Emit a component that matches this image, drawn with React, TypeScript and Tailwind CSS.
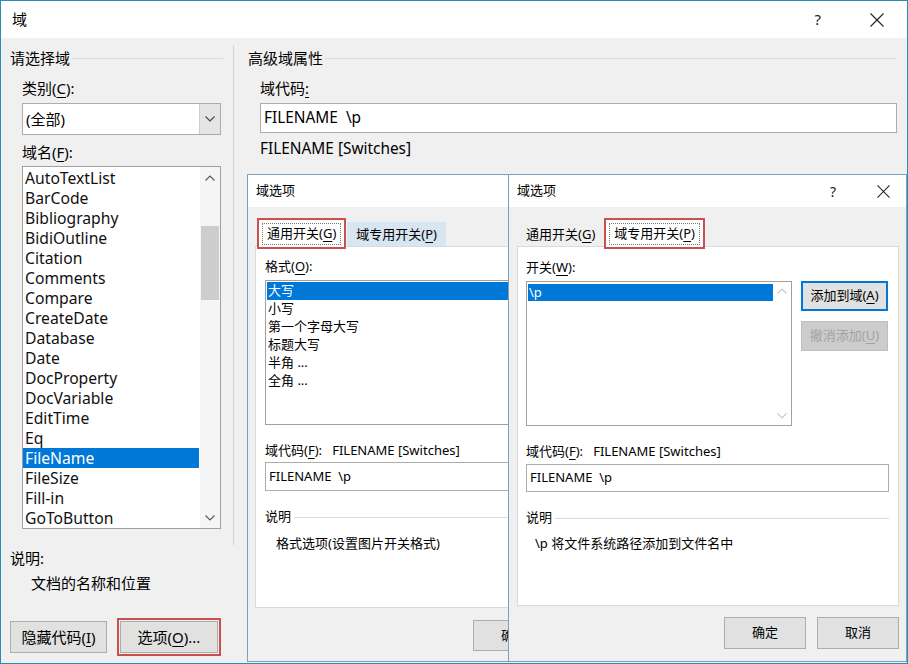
import React from "react";

const F = "font-['Noto_Sans','Noto_Sans_CJK_SC',sans-serif]";

function U({ c }: { c: string }) {
  return <span className="underline underline-offset-[3px] decoration-1">{c}</span>;
}

function Close({ size = 14 }: { size?: number }) {
  return (
    <svg width={size} height={size} viewBox="0 0 14 14" fill="none" stroke="#222" strokeWidth="1.1">
      <line x1="0.5" y1="0.5" x2="13.5" y2="13.5" />
      <line x1="13.5" y1="0.5" x2="0.5" y2="13.5" />
    </svg>
  );
}

function Chev({ up = false, color = "#555" }: { up?: boolean; color?: string }) {
  return (
    <svg width="10" height="6" viewBox="0 0 10 6" fill="none" stroke={color} strokeWidth="1.1">
      {up ? <polyline points="0.5,5.5 5,1 9.5,5.5" /> : <polyline points="0.5,0.5 5,5 9.5,0.5" />}
    </svg>
  );
}

function Btn({ children, w, h = 32, cls = "" }: { children: React.ReactNode; w: number; h?: number; cls?: string }) {
  return (
    <div
      className={`flex items-center justify-center border border-[#adadad] bg-[#e1e1e1] ${cls}`}
      style={{ width: w, height: h }}
    >
      {children}
    </div>
  );
}

const mainItems = [
  "AutoTextList",
  "BarCode",
  "Bibliography",
  "BidiOutline",
  "Citation",
  "Comments",
  "Compare",
  "CreateDate",
  "Database",
  "Date",
  "DocProperty",
  "DocVariable",
  "EditTime",
  "Eq",
  "FileName",
  "FileSize",
  "Fill-in",
  "GoToButton",
];

const formats = ["大写", "小写", "第一个字母大写", "标题大写", "半角 ...", "全角 ..."];

function MainWindow() {
  return (
    <div className="flex flex-col h-full">
      {/* title bar */}
      <div className="h-[37px] bg-white flex items-center shrink-0">
        <span className="ml-[11px] text-[15px]">域</span>
        <span className="ml-auto text-[15px] text-[#222] mr-[49px]">?</span>
        <div className="mr-[23px]">
          <Close />
        </div>
      </div>
      <div className="flex flex-1">
        {/* left column */}
        <div className="w-[232px] pl-[9px] pr-[10px] pt-[10px] text-[15px]">
          <div className="h-[20px] flex items-center">
            <span>请选择域</span>
            <div className="flex-1 h-px bg-[#dcdcdc] ml-[2px]" />
          </div>
          <div className="pl-[12px]">
            <div className="mt-[10px] h-[20px] flex items-center">
              类别(<U c="C" />):
            </div>
            <div className="mt-[5px] w-[199px] h-[32px] border border-[#acacac] bg-white flex">
              <div className="flex-1 flex items-center pl-[3px]">(全部)</div>
              <div className="w-[21px] bg-[#e5e5e5] border-l border-[#cfcfcf] flex items-center justify-center">
                <Chev color="#444" />
              </div>
            </div>
            <div className="mt-[7px] h-[20px] flex items-center">
              域名(<U c="F" />):
            </div>
            <div className="mt-[4px] w-[199px] h-[363px] border border-[#a0a0a0] bg-white flex">
              <div className="flex-1 pt-[1px] pr-[1px] text-[15.7px]">
                {mainItems.map((it) => (
                  <div
                    key={it}
                    className={`h-[20px] flex items-center pl-[2px] pt-[2px] leading-none ${
                      it === "FileName" ? "bg-[#0078d7] text-white" : "text-[#111]"
                    }`}
                  >
                    {it}
                  </div>
                ))}
              </div>
              <div className="w-[20px] bg-[#f5f5f5] flex flex-col">
                <div className="h-[21px] flex items-center justify-center">
                  <Chev up color="#555" />
                </div>
                <div className="flex-1 pt-[38px] px-[1px]">
                  <div className="h-[74px] bg-[#cdcdcd]" />
                </div>
                <div className="h-[21px] flex items-center justify-center">
                  <Chev color="#555" />
                </div>
              </div>
            </div>
          </div>
          <div className="mt-[19px] h-[20px] flex items-center">说明:</div>
          <div className="mt-[5px] h-[20px] flex items-center pl-[21px]">文档的名称和位置</div>
          <div className="mt-[25px] flex items-center">
            <Btn w={97}>
              隐藏代码(<U c="I" />)
            </Btn>
            <div className="ml-[10px] border-[2.5px] border-[#c9504e] p-[1px]">
              <Btn w={98}>
                选项(<U c="O" />)...
              </Btn>
            </div>
          </div>
        </div>
        {/* divider */}
        <div className="w-px bg-[#d3d3d3] mt-[7px] h-[500px]" />
        {/* right column */}
        <div className="flex-1 pl-[14px] pr-[10px] pt-[10px] text-[15px]">
          <div className="h-[20px] flex items-center pr-[1px]">
            <span>高级域属性</span>
            <div className="flex-1 h-px bg-[#dcdcdc] ml-[2px]" />
          </div>
          <div className="pl-[12px]">
            <div className="mt-[10px] h-[20px] flex items-center">
              域代码<U c=":" />
            </div>
            <div className="mt-[5px] h-[30px] border border-[#acacac] bg-white flex items-center pl-[3px] text-[15.4px]">
              FILENAME&nbsp;&nbsp;\p
            </div>
            <div className="mt-[6px] h-[20px] flex items-center text-[15.4px]">FILENAME [Switches]</div>
          </div>
        </div>
      </div>
    </div>
  );
}

function Tab({
  label,
  k,
  selected,
  hover,
}: {
  label: string;
  k: string;
  selected?: boolean;
  hover?: boolean;
}) {
  if (selected) {
    return (
      <div className="h-[27px] bg-white px-[3px] pt-[3px] pb-[2px] relative z-10">
        <div className="h-full border border-dotted border-[#777] px-[4px] flex items-center">
          {label}(<U c={k} />)
        </div>
      </div>
    );
  }
  return (
    <div
      className={`h-[24px] px-[8px] flex items-center border border-b-0 ${
        hover ? "bg-[#d8e6f2] border-[#d8e6f2]" : "border-transparent"
      }`}
    >
      {label}(<U c={k} />)
    </div>
  );
}

function MiddleDialog() {
  return (
    <div className="absolute left-[246px] top-[173px] w-[411px] h-[488px] border border-[#7d9fbb] bg-[#f0f0f0] text-[13px] flex flex-col">
      <div className="h-[32px] bg-white flex items-center pl-[8px] shrink-0">域选项</div>
      <div className="pl-[7px] pr-[8px]">
        <div className="mt-[12px] flex items-end h-[27px] ml-[2px]">
          <div className="border-[2.5px] border-[#c9504e] -my-[3px] flex items-end">
            <Tab label="通用开关" k="G" selected />
          </div>
          <div className="ml-[1px]">
            <Tab label="域专用开关" k="P" hover />
          </div>
        </div>
        <div className="h-[362px] bg-white border border-[#dadada] pl-[9px] pr-[8px]">
          <div className="mt-[10px] h-[20px] flex items-center">
            格式(<U c="O" />):
          </div>
          <div className="mt-[3px] h-[145px] border border-[#a0a0a0] pt-[1px] px-[1px]">
            {formats.map((f, i) => (
              <div
                key={f}
                className={`h-[18px] flex items-center pl-[1px] text-[13px] ${
                  i === 0 ? "bg-[#0078d7] text-white" : ""
                }`}
              >
                {f}
              </div>
            ))}
          </div>
          <div className="mt-[16px] h-[20px] flex items-center">
            域代码(<U c="F" />):&nbsp;&nbsp;&nbsp;FILENAME [Switches]
          </div>
          <div className="mt-[1px] h-[29px] border border-[#acacac] flex items-center pl-[3px]">
            FILENAME&nbsp;&nbsp;\p
          </div>
          <div className="mt-[16px] h-[20px] flex items-center">
            <span>说明</span>
            <div className="flex-1 h-px bg-[#dcdcdc] ml-[3px]" />
          </div>
          <div className="mt-[7px] h-[20px] flex items-center pl-[11px]">格式选项(设置图片开关格式)</div>
        </div>
        <div className="mt-[12px] flex justify-end gap-[11px] pr-[1px]">
          <Btn w={82} h={31}>确定</Btn>
          <Btn w={82} h={31}>取消</Btn>
        </div>
      </div>
    </div>
  );
}

function RightDialog() {
  return (
    <div className="absolute left-[507px] top-[173px] w-[399px] h-[488px] border border-[#7d9fbb] bg-[#f0f0f0] text-[13px] flex flex-col">
      <div className="h-[32px] bg-white flex items-center pl-[8px] shrink-0">
        <span>域选项</span>
        <span className="ml-auto mr-[41px] text-[14px] text-[#222]">?</span>
        <div className="mr-[16px]">
          <Close size={13} />
        </div>
      </div>
      <div className="pl-[8px] pr-[7px]">
        <div className="mt-[12px] flex items-end h-[27px]">
          <Tab label="通用开关" k="G" />
          <div className="border-[2.5px] border-[#c9504e] -my-[3px] flex items-end">
            <Tab label="域专用开关" k="P" selected />
          </div>
        </div>
        <div className="h-[360px] bg-white border border-[#dadada] pl-[8px] pr-[8px]">
          <div className="mt-[11px] h-[20px] flex items-center">
            开关(<U c="W" />):
          </div>
          <div className="mt-[3px] flex">
            <div className="w-[266px] h-[145px] border border-[#a0a0a0] flex">
              <div className="flex-1 pt-[2px] pl-[1px]">
                <div className="h-[17px] bg-[#0078d7] text-white flex items-center pl-[1px]">\p</div>
              </div>
              <div className="w-[18px] flex flex-col justify-between py-[6px] items-center">
                <Chev up color="#c8c8c8" />
                <Chev color="#c8c8c8" />
              </div>
            </div>
            <div className="ml-[9px] flex flex-col gap-[10px]">
              <div className="w-[87px] h-[30px] border-2 border-[#0078d7] bg-[#e1e1e1] flex items-center justify-center">
                添加到域(<U c="A" />)
              </div>
              <div className="w-[87px] h-[30px] border border-[#bfbfbf] bg-[#cccccc] text-[#a3a3a3] flex items-center justify-center">
                撤消添加(<U c="U" />)
              </div>
            </div>
          </div>
          <div className="mt-[16px] h-[20px] flex items-center">
            域代码(<U c="F" />):&nbsp;&nbsp;&nbsp;FILENAME [Switches]
          </div>
          <div className="mt-[2px] h-[28px] w-[363px] border border-[#acacac] flex items-center pl-[3px]">
            FILENAME&nbsp;&nbsp;\p
          </div>
          <div className="mt-[16px] h-[20px] flex items-center pr-[1px]">
            <span>说明</span>
            <div className="flex-1 h-px bg-[#dcdcdc] ml-[3px]" />
          </div>
          <div className="mt-[6px] h-[20px] flex items-center pl-[9px]">\p 将文件系统路径添加到文件名中</div>
        </div>
        <div className="mt-[11px] flex justify-end gap-[11px]">
          <Btn w={82} h={32}>确定</Btn>
          <Btn w={82} h={32}>取消</Btn>
        </div>
      </div>
    </div>
  );
}

export default function App() {
  return (
    <div
      className={`relative w-[908px] h-[664px] overflow-hidden bg-[#f0f0f0] border border-[#2f8bb0] text-black ${F}`}
    >
      <MainWindow />
      <MiddleDialog />
      <RightDialog />
    </div>
  );
}
